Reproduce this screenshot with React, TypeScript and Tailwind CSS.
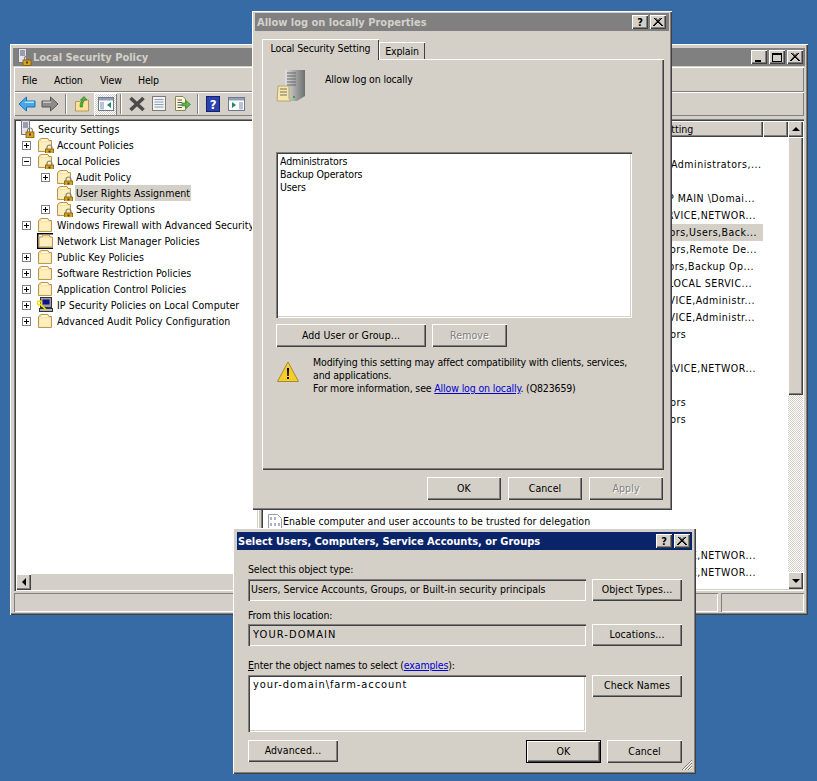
import type { ReactNode } from "react";

const raised = "bg-[#d4d0c8] shadow-[inset_1px_1px_0_#fff,inset_-1px_-1px_0_#404040,inset_-2px_-2px_0_#808080]";
const sunken = "shadow-[inset_1px_1px_0_#808080,inset_2px_2px_0_#404040,inset_-1px_-1px_0_#fff,inset_-2px_-2px_0_#d4d0c8]";
const windowFrame = "absolute bg-[#d4d0c8] flex flex-col shadow-[inset_1px_1px_0_#fff,inset_-1px_-1px_0_#404040,inset_-2px_-2px_0_#808080]";
const captionText = "font-bold text-[11px] tracking-normal pt-[1px]";

function Lock({ x = 8, y = 8 }: { x?: number; y?: number }) {
  return (
    <g transform={`translate(${x} ${y})`}>
      <path d="M2 4V2.5a2.5 2.5 0 0 1 5 0V4" fill="none" stroke="#8a8470" strokeWidth="1.2" />
      <rect x="0.5" y="4" width="8" height="5.5" fill="#d9a520" stroke="#7a5a10" strokeWidth="0.8" />
      <rect x="3.5" y="5.5" width="2" height="2" fill="#5a3f08" />
    </g>
  );
}

function Folder({ lock = false }: { lock?: boolean }) {
  return (
    <svg width="17" height="16" viewBox="0 0 17 16" className="shrink-0">
      <path d="M1.5 3.5 L4 1.5 H11 L12 3.5 H14.5 V14.5 H1.5 Z" fill="#fbe29c" stroke="#b9975a" />
      <path d="M2.5 5 H13.5 V13.5 H2.5 Z" fill="#fdeebe" />
      <path d="M4.5 2.5 H10.5 V4 H4.5 Z" fill="#fffbe8" />
      {lock && <Lock />}
    </svg>
  );
}

function FramedFolder() {
  return (
    <svg width="17" height="16" viewBox="0 0 17 16" className="shrink-0">
      <path d="M0 0 H16 V1.5 H1.5 V14.5 H16 V16 H0 Z" fill="#000" />
      <path d="M2 4 H5 L6 2 H12 L13 4 H15.5 V14 H2 Z" fill="#fbe29c" stroke="#b9975a" />
      <path d="M3 5 H14.5 V13 H3 Z" fill="#fdeebe" />
    </svg>
  );
}

function ServerLock() {
  return (
    <svg width="15" height="18" viewBox="0 0 15 18" className="shrink-0">
      <rect x="1.5" y="0.5" width="8" height="14" fill="#e4e4ea" stroke="#77778a" />
      <path d="M3 3 H8 M3 5 H8 M3 7 H8" stroke="#55556a" />
      <Lock x={5.5} y={8} />
    </svg>
  );
}

function IpSecurity() {
  return (
    <svg width="17" height="16" viewBox="0 0 17 16" className="shrink-0">
      <rect x="3.5" y="0.5" width="11" height="10" fill="#9a9aa6" stroke="#333" />
      <rect x="5.5" y="2.5" width="7" height="5" fill="#10108a" />
      <rect x="2.5" y="11.5" width="13" height="3" fill="#b5b5bd" stroke="#333" />
      <circle cx="2.5" cy="6" r="2" fill="none" stroke="#f5e000" strokeWidth="1.6" />
      <path d="M4 7.5 L9 13" stroke="#f5e000" strokeWidth="1.6" />
    </svg>
  );
}

function Expander({ open = false }: { open?: boolean }) {
  return (
    <span className="relative block w-[9px] h-[9px] shrink-0 border border-[#808080] bg-white">
      <span className="absolute left-[1px] top-[3px] w-[5px] h-[1px] bg-black" />
      {!open && <span className="absolute left-[3px] top-[1px] w-[1px] h-[5px] bg-black" />}
    </span>
  );
}

function TreeRow({ level, icon, label, expander, selected }: { level: 0 | 1; icon: ReactNode; label: string; expander?: "plus" | "minus"; selected?: boolean }) {
  return (
    <div className={`flex items-center h-[16px] ${level === 1 ? "pl-[27px]" : "pl-[8px]"}`}>
      <span className="w-[15px] shrink-0">{expander && <Expander open={expander === "minus"} />}</span>
      {icon}
      <span className={`ml-[2px] px-[1px] h-[16px] leading-[17px] whitespace-nowrap ${selected ? "bg-[#d4d0c8]" : ""}`}>{label}</span>
    </div>
  );
}

function CaptionButton({ children, className = "" }: { children: ReactNode; className?: string }) {
  return <div className={`${raised} w-[16px] h-[14px] flex items-center justify-center ${className}`}>{children}</div>;
}

const closeGlyph = (
  <svg width="10" height="8" viewBox="0 0 10 8">
    <path d="M1 0 L9 8 M2.5 0 L10 8 M9 0 L1 8 M7.5 0 L0 8" stroke="#000" strokeWidth="1" fill="none" />
  </svg>
);

function HelpClose() {
  return (
    <div className="flex gap-[2px] mr-[2px]">
      <CaptionButton><span className="font-bold text-[11px] leading-none text-black">?</span></CaptionButton>
      <CaptionButton>{closeGlyph}</CaptionButton>
    </div>
  );
}

function Button({ children, className = "", disabled = false }: { children: ReactNode; className?: string; disabled?: boolean }) {
  return (
    <div className={`${raised} h-[23px] pb-[2px] tracking-[0.1px] flex items-center justify-center ${disabled ? "text-[#808080] [text-shadow:1px_1px_0_#fff]" : ""} ${className}`}>
      {children}
    </div>
  );
}

function Triangle({ dir }: { dir: "up" | "down" | "left" }) {
  const d = dir === "up" ? "M4 0 L8 4 H0 Z" : dir === "down" ? "M0 0 H8 L4 4 Z" : "M4 0 V8 L0 4 Z";
  const size = dir === "left" ? "w-[4px] h-[8px]" : "w-[8px] h-[4px]";
  const box = dir === "left" ? "0 0 4 8" : "0 0 8 4";
  return (
    <svg viewBox={box} className={size}>
      <path d={d} fill="#000" />
    </svg>
  );
}

function Toolbar() {
  return (
    <div className="mx-[1px] h-[24px] flex items-center shadow-[inset_1px_1px_0_#fff,inset_-1px_-1px_0_#808080] pl-[4px]">
      <svg width="18" height="16" viewBox="0 0 18 16">
        <path d="M1 8 L8.5 1 V5 H17 V11 H8.5 V15 Z" fill="#45a8ec" stroke="#1a6fb8" />
        <path d="M8 5.5 H16 V7 H6 Z" fill="#b8e2fb" />
      </svg>
      <svg width="18" height="16" viewBox="0 0 18 16" className="ml-[5px]">
        <path d="M17 8 L9.5 1 V5 H1 V11 H9.5 V15 Z" fill="#8c8c8c" stroke="#555" />
        <path d="M2 5.5 H10 V7 H2 Z" fill="#c8c8c8" />
      </svg>
      <div className="w-[2px] h-[20px] ml-[6px] bg-[#808080] border-r border-white" />
      <svg width="16" height="16" viewBox="0 0 16 16" className="ml-[7px]">
        <path d="M1.5 5.5 H6 L7 4 H14.5 V15 H1.5 Z" fill="#fbe29c" stroke="#b9975a" />
        <path d="M6 11 C6 7 7 5 8.5 4 L6.5 4 L10 0.5 L13 4 L11 4 C9.5 5 8.5 7 8.5 11 Z" fill="#4caf3c" stroke="#2a7a20" strokeWidth="0.6" />
      </svg>
      <div className="ml-[4px] w-[23px] h-[23px] flex items-center justify-center shadow-[inset_1px_1px_0_#fff,inset_-1px_-1px_0_#808080] bg-[repeating-conic-gradient(#d4d0c8_0%_25%,#fff_0%_50%)] bg-[length:2px_2px]">
        <svg width="16" height="14" viewBox="0 0 16 14">
          <rect x="0.5" y="0.5" width="15" height="13" fill="#fff" stroke="#6d7a8c" />
          <rect x="1" y="1" width="14" height="2.5" fill="#8fa0b8" />
          <path d="M2 5 H6 V12.5 H2 Z" fill="#b8c4d4" />
          <path d="M13 5 L9 8 L13 11 Z" fill="#1e8a6a" />
        </svg>
      </div>
      <div className="w-[2px] h-[20px] ml-[3px] bg-[#808080] border-r border-white" />
      <svg width="18" height="16" viewBox="0 0 18 16" className="ml-[6px]">
        <path d="M2.5 2 L15.5 14 M15.5 2 L2.5 14" stroke="#4a4a4a" strokeWidth="3.6" />
      </svg>
      <svg width="16" height="16" viewBox="0 0 16 16" className="ml-[5px]">
        <rect x="1.5" y="0.5" width="13" height="14" fill="#f2f2ee" stroke="#7a7a78" />
        <path d="M3.5 3.5 H12.5 M3.5 6 H12.5 M3.5 8.5 H12.5 M3.5 11 H12.5" stroke="#8aa0b8" />
      </svg>
      <svg width="17" height="16" viewBox="0 0 17 16" className="ml-[7px]">
        <path d="M1.5 0.5 H9 L11.5 3 V14.5 H1.5 Z" fill="#fbf6dc" stroke="#8a8458" />
        <path d="M3.5 4 H8 M3.5 6.5 H8 M3.5 9 H8 M3.5 11.5 H8" stroke="#555" />
        <path d="M8 7 H12 V4.5 L16.5 8.5 L12 12.5 V10 H8 Z" fill="#58b848" stroke="#2a7a20" strokeWidth="0.6" />
      </svg>
      <div className="w-[2px] h-[20px] ml-[6px] bg-[#808080] border-r border-white" />
      <div className="ml-[7px] w-[14px] h-[16px] bg-[#2a42b0] border border-[#16206a] flex items-center justify-center text-white font-bold text-[13px] leading-none">?</div>
      <svg width="17" height="14" viewBox="0 0 17 14" className="ml-[8px]">
        <rect x="0.5" y="0.5" width="16" height="13" fill="#fff" stroke="#6d7a8c" />
        <rect x="1" y="1" width="15" height="2.5" fill="#8fa0b8" />
        <path d="M11 5 H15 V12.5 H11 Z" fill="#b8c4d4" />
        <path d="M4 5 L8 8 L4 11 Z" fill="#1e8a6a" />
      </svg>
    </div>
  );
}

function TreePane() {
  return (
    <div className={`relative w-[245px] h-[472px] shrink-0 bg-white ${sunken} flex flex-col tracking-[0.05px]`}>
      <div className="flex-1 pt-[2px] overflow-hidden">
        <div className="flex items-center h-[16px] pl-[6px]">
          <ServerLock />
          <span className="ml-[3px] leading-[17px]">Security Settings</span>
        </div>
        <TreeRow level={0} expander="plus" icon={<Folder lock />} label="Account Policies" />
        <TreeRow level={0} expander="minus" icon={<Folder lock />} label="Local Policies" />
        <TreeRow level={1} expander="plus" icon={<Folder lock />} label="Audit Policy" />
        <TreeRow level={1} icon={<Folder lock />} label="User Rights Assignment" selected />
        <TreeRow level={1} expander="plus" icon={<Folder lock />} label="Security Options" />
        <TreeRow level={0} expander="plus" icon={<Folder />} label="Windows Firewall with Advanced Security" />
        <TreeRow level={0} icon={<FramedFolder />} label="Network List Manager Policies" />
        <TreeRow level={0} expander="plus" icon={<Folder />} label="Public Key Policies" />
        <TreeRow level={0} expander="plus" icon={<Folder />} label="Software Restriction Policies" />
        <TreeRow level={0} expander="plus" icon={<Folder />} label="Application Control Policies" />
        <TreeRow level={0} expander="plus" icon={<IpSecurity />} label="IP Security Policies on Local Computer" />
        <TreeRow level={0} expander="plus" icon={<Folder />} label="Advanced Audit Policy Configuration" />
      </div>
      <div className="mx-[2px] mb-[1px] h-[16px] flex bg-[#d4d0c8]">
        <div className={`${raised} w-[15px] flex items-center justify-center`}><Triangle dir="left" /></div>
      </div>
    </div>
  );
}

// long values are pinned by their right end, the start is hidden behind the dialog
const settings: { text: string; cell?: string; selected?: boolean }[] = [
  { text: "" },
  { text: "NT SERVICE,Administrators,...", cell: "text-right pr-[10px]" },
  { text: "" },
  { text: "CORP MAIN \\Domai...", cell: "text-right pr-[8px]" },
  { text: "LOCAL SERVICE,NETWOR...", cell: "text-right pr-[7px]" },
  { text: "Administrators,Users,Back...", cell: "text-right pr-[6px]", selected: true },
  { text: "Administrators,Remote De...", cell: "text-right pr-[6px]" },
  { text: "Administrators,Backup Op...", cell: "text-right pr-[9px]" },
  { text: "NT LOCAL SERVIC...", cell: "text-right pr-[11px]" },
  { text: "LOCAL SERVICE,Administr...", cell: "text-right pr-[8px]" },
  { text: "LOCAL SERVICE,Administr...", cell: "text-right pr-[8px]" },
  { text: "Administrators", cell: "pl-[3px]" },
  { text: "" },
  { text: "LOCAL SERVICE,NETWOR...", cell: "text-right pr-[7px]" },
  { text: "" },
  { text: "Administrators", cell: "pl-[3px]" },
  { text: "Administrators", cell: "pl-[3px]" },
  { text: "" },
  { text: "" },
  { text: "" },
  { text: "" },
  { text: "" },
  { text: "" },
  { text: "" },
  { text: "LOCAL SERVICE,NETWOR...", cell: "text-right pr-[7px]" },
  { text: "LOCAL SERVICE,NETWOR...", cell: "text-right pr-[7px]" },
];

function ListPane() {
  return (
    <div className={`relative ml-[2px] flex-1 h-[472px] bg-white ${sunken} flex pl-[2px] pt-[2px] pr-[1px] pb-[2px] tracking-[0.05px]`}>
      <div className="flex-1 min-w-0 overflow-hidden">
        <div className="flex h-[16px] mb-[2px]">
          <div className="w-[344px] shrink-0" />
          <div className={`${raised} w-[156px] shrink-0 pl-[10px] leading-[17px]`}>Security Setting</div>
          <div className={`${raised} flex-1`} />
        </div>
        {settings.map((row, i) => (
          <div key={i} className="flex h-[17px] leading-[17px] whitespace-nowrap">
            <div className="w-[344px] shrink-0 flex items-center pl-[5px]">
              {i === 22 && (
                <>
                  <svg width="14" height="15" viewBox="0 0 14 15" className="shrink-0">
                    <path d="M0.5 0.5 H9.5 L13.5 4.5 V14.5 H0.5 Z" fill="#fff" stroke="#9a9ab0" />
                    <path d="M2 3 H4 V6 H2 Z M6 3 H8 V6 H6 Z M2 9 H4 V12 H2 Z M6 9 H8 V12 H6 Z M10 9 H12 V12 H10 Z" fill="#b0b0c4" />
                  </svg>
                  <span className="ml-[1px]">Enable computer and user accounts to be trusted for delegation</span>
                </>
              )}
            </div>
            <div className={`w-[156px] shrink-0 overflow-hidden tracking-[0.5px] ${row.cell ?? ""} ${row.selected ? "bg-[#d4d0c8]" : ""}`}>{row.text}</div>
          </div>
        ))}
      </div>
      <div className="w-[15px] shrink-0 flex flex-col">
        <div className={`${raised} h-[16px] flex items-center justify-center`}><Triangle dir="up" /></div>
        <div className={`${raised} h-[258px]`} />
        <div className="flex-1 bg-[repeating-conic-gradient(#d4d0c8_0%_25%,#fff_0%_50%)] bg-[length:2px_2px]" />
        <div className={`${raised} h-[17px] flex items-center justify-center`}><Triangle dir="down" /></div>
      </div>
    </div>
  );
}

function MainWindow() {
  return (
    <div className={`${windowFrame} left-[10px] top-[44px] w-[798px] h-[571px] pt-[4px] px-[3px]`}>
      <div className="h-[18px] bg-[#808080] flex items-center pl-[4px] pr-[2px] shrink-0">
        <ServerLock />
        <span className={`ml-[1px] ${captionText} text-[#d4d0c8] flex-1`}>Local Security Policy</span>
        <div className="flex">
          <CaptionButton><span className="mt-[7px] ml-[-3px] w-[6px] h-[2px] bg-black" /></CaptionButton>
          <CaptionButton className="ml-[2px]"><span className="w-[10px] h-[9px] border border-black border-t-2" /></CaptionButton>
          <CaptionButton className="ml-[2px]">{closeGlyph}</CaptionButton>
        </div>
      </div>
      <div className="mt-[1px] mx-[1px] h-[25px] flex items-center shrink-0 leading-[18px] pl-[8px] shadow-[inset_1px_1px_0_#fff,inset_-1px_-1px_0_#808080]">
        <span className="w-[32px]">File</span>
        <span className="w-[46px]">Action</span>
        <span className="w-[38px]">View</span>
        <span>Help</span>
      </div>
      <Toolbar />
      <div className="mt-[3px] mx-[1px] flex">
        <TreePane />
        <ListPane />
      </div>
      <div className="mt-[2px] mx-[1px] flex h-[19px]">
        <div className="flex-1 shadow-[inset_1px_1px_0_#808080,inset_-1px_-1px_0_#fff]" />
        <div className="ml-[3px] w-[83px] shadow-[inset_1px_1px_0_#808080,inset_-1px_-1px_0_#fff]" />
      </div>
    </div>
  );
}

function PropertiesDialog() {
  return (
    <div className={`${windowFrame} left-[252px] top-[11px] w-[420px] h-[499px] pt-[2px] pl-[3px] pr-[2px]`}>
      <div className="h-[18px] bg-[#808080] flex items-center justify-between pl-[2px] pr-[1px] mr-[1px]">
        <span className={`${captionText} text-[#d4d0c8]`}>Allow log on locally Properties</span>
        <HelpClose />
      </div>
      <div className="relative z-10 flex items-end h-[29px] pl-[7px] mb-[-1px]">
        <div className="w-[117px] h-[21px] text-center leading-[19px] bg-[#d4d0c8] shadow-[inset_1px_1px_0_#fff,inset_-1px_0_0_#404040]">Local Security Setting</div>
        <div className="w-[46px] h-[18px] text-center leading-[19px] shadow-[inset_1px_1px_0_#fff,inset_-1px_0_0_#404040] border-b border-white">Explain</div>
      </div>
      <div className="ml-[7px] w-[402px] h-[411px] pl-[14px] pt-[11px] shadow-[inset_1px_1px_0_#fff,inset_-1px_-1px_0_#404040,inset_-2px_-2px_0_#808080]">
        <div className="flex h-[82px]">
          <svg width="30" height="33" viewBox="0 0 30 33" className="shrink-0">
            <defs>
              <linearGradient id="tower" x1="0" x2="1" y1="0" y2="0">
                <stop offset="0" stopColor="#e0e0e0" />
                <stop offset="0.6" stopColor="#9a9a9a" />
                <stop offset="1" stopColor="#6e7070" />
              </linearGradient>
            </defs>
            <path d="M9 0 H29 V26 L21 31 H9 Z" fill="url(#tower)" />
            <path d="M11 3 H20 M11 6 H20 M11 9 H20 M11 12 H20 M11 15 H20" stroke="#666" />
            <rect x="17" y="26" width="2" height="2" fill="#3fa83f" />
            <path d="M2 16 H13 V29 L15 31 H1 Z" fill="#f6e6b0" stroke="#b8a46c" />
            <path d="M4 19 H11 M4 22 H11 M4 25 H11" stroke="#77705a" />
          </svg>
          <span className="ml-[19px] mt-[1px]">Allow log on locally</span>
        </div>
        <div className={`w-[356px] h-[166px] bg-white ${sunken} px-[4px] pt-[3px] leading-[13px]`}>
          <div>Administrators</div>
          <div>Backup Operators</div>
          <div>Users</div>
        </div>
        <div className="flex mt-[6px]">
          <Button className="w-[150px]">Add User or Group...</Button>
          <Button className="w-[75px] ml-[6px]" disabled>Remove</Button>
        </div>
        <div className="flex mt-[9px]">
          <svg width="24" height="24" viewBox="0 0 24 24" className="shrink-0 mt-[4px]">
            <path d="M12 2 L22.5 21.5 H1.5 Z" fill="#f7cc2e" stroke="#a88a30" />
            <path d="M11 8 H13 L12.7 16 H11.3 Z" fill="#000" />
            <rect x="11" y="17" width="2" height="2" fill="#000" />
          </svg>
          <div className="ml-[13px] leading-[13px] whitespace-nowrap">
            <div>Modifying this setting may affect compatibility with clients, services,</div>
            <div>and applications.</div>
            <div>For more information, see <span className="text-[#0000d0] underline">Allow log on locally</span>. (Q823659)</div>
          </div>
        </div>
      </div>
      <div className="flex justify-end gap-[7px] mt-[7px] pr-[7px]">
        <Button className="w-[74px]">OK</Button>
        <Button className="w-[74px]">Cancel</Button>
        <Button className="w-[74px]" disabled>Apply</Button>
      </div>
    </div>
  );
}

function SelectDialog() {
  const field = `w-[338px] h-[22px] flex items-center pl-[3px] shrink-0 ${sunken}`;
  return (
    <div className={`${windowFrame} left-[233px] top-[528px] w-[463px] h-[246px] pt-[4px] px-[4px]`}>
      <div className="h-[18px] bg-[#0a246a] flex items-center justify-between pl-[1px] shrink-0">
        <span className={`${captionText} text-white`}>Select Users, Computers, Service Accounts, or Groups</span>
        <HelpClose />
      </div>
      <div className="pl-[11px] pt-[12px]">
        <div className="h-[17px] leading-[15px]">Select this object type:</div>
        <div className="flex gap-[6px]">
          <div className={`${field} pb-[2px] tracking-normal`}>Users, Service Accounts, Groups, or Built-in security principals</div>
          <Button className="w-[90px] !h-[22px]">Object Types...</Button>
        </div>
        <div className="h-[23px] leading-[15px] pt-[7px]">From this location:</div>
        <div className="flex gap-[6px]">
          <div className={`${field} pl-[5px] text-[11px] tracking-[1.1px]`}>YOUR-DOMAIN</div>
          <Button className="w-[90px] !h-[22px]">Locations...</Button>
        </div>
        <div className="h-[29px] pt-[12px] leading-[15px]">
          <span className="underline">E</span>nter the object names to select (<span className="text-[#0000d0] underline">examples</span>):
        </div>
        <div className="flex gap-[6px]">
          <div className={`w-[338px] h-[57px] bg-white px-[5px] pt-[2px] text-[11px] tracking-[0.95px] ${sunken}`}>your-domain\farm-account</div>
          <Button className="w-[90px] !h-[22px]">Check Names</Button>
        </div>
        <div className="flex mt-[8px]">
          <Button className="w-[90px] !h-[22px]">Advanced...</Button>
          <div className="ml-[188px] w-[75px] h-[23px] border border-black">
            <Button className="w-full !h-[21px]">OK</Button>
          </div>
          <Button className="w-[75px] ml-[6px]">Cancel</Button>
        </div>
      </div>
      <svg width="12" height="12" viewBox="0 0 12 12" className="absolute right-[3px] bottom-[3px]">
        <path d="M11 1 L1 11 M11 4 L4 11 M11 7 L7 11" stroke="#808080" />
        <path d="M11 2 L2 11 M11 5 L5 11 M11 8 L8 11" stroke="#fff" />
      </svg>
    </div>
  );
}

export default function App() {
  return (
    <div className="relative w-[817px] h-[781px] overflow-hidden bg-[#376ba5] text-black text-[10.5px] tracking-[-0.15px] leading-[16px] [font-family:'DejaVu_Sans_Condensed','Liberation_Sans',sans-serif]">
      <MainWindow />
      <PropertiesDialog />
      <SelectDialog />
    </div>
  );
}
